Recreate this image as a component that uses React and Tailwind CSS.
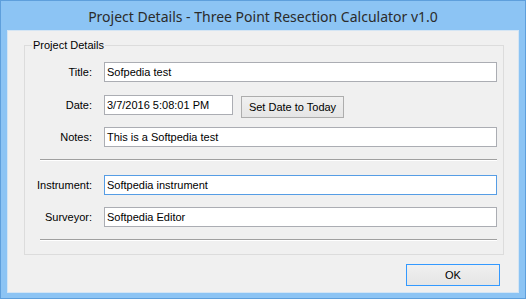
const fields = [
  { label: "Title:", value: "Sofpedia test" },
];

function TextBox({ value, width = "w-[393px]", focused = false }) {
  return (
    <div
      className={`${width} h-[20px] bg-white border ${
        focused ? "border-[#569de5]" : "border-[#abadb3]"
      } flex items-center pl-[2px] text-[11px] text-black leading-none whitespace-nowrap overflow-hidden`}
    >
      {value}
    </div>
  );
}

function Row({ label, children, className = "" }) {
  return (
    <div className={`flex items-start ${className}`}>
      <div className="w-[67px] h-[20px] flex items-center justify-end text-[11px] text-black leading-none">
        {label}
      </div>
      <div className="ml-[12px] flex items-start">{children}</div>
    </div>
  );
}

function Separator({ className = "" }) {
  return (
    <div className={`ml-[15px] w-[457px] ${className}`}>
      <div className="h-px bg-[#a0a0a0]" />
      <div className="h-px bg-white" />
    </div>
  );
}

export default function App() {
  return (
    <div className="w-[526px] h-[299px] bg-[#8cc4f4] border border-[#5e9fdc] flex flex-col font-['Liberation_Sans',Arial,sans-serif]">
      {/* title bar */}
      <div className="h-[29px] flex items-center justify-center text-[14px] text-[#2b2b2b] font-['Noto_Sans',sans-serif] pt-[2px]">
        Project Details - Three Point Resection Calculator v1.0
      </div>

      {/* client area */}
      <div className="mx-[6px] h-[263px] border border-[#d4e5f4] bg-[#f0f0f0] flex flex-col">
        <fieldset className="ml-[16px] mt-[8px] w-[480px] h-[216px] border border-[#dcdcdc]">
          <legend className="ml-[7px] px-[1px] text-[11px] leading-[13px] text-black">
            Project Details
          </legend>

          <div className="flex flex-col">
            <Row label="Title:" className="mt-[10px]">
              <TextBox value={fields[0].value} />
            </Row>

            <Row label="Date:" className="mt-[13px]">
              <TextBox value="3/7/2016 5:08:01 PM" width="w-[129px]" />
              <button className="ml-[8px] mt-[1px] w-[103px] h-[22px] border border-[#adadad] bg-gradient-to-b from-[#f0f0f0] to-[#e5e5e5] text-[11px] text-black leading-none flex items-center justify-center">
                Set Date to Today
              </button>
            </Row>

            <Row label="Notes:" className="mt-[9px]">
              <TextBox value="This is a Softpedia test" />
            </Row>

            <Separator className="mt-[12px]" />

            <Row label="Instrument:" className="mt-[14px]">
              <TextBox value="Softpedia instrument" focused />
            </Row>

            <Row label="Surveyor:" className="mt-[12px]">
              <TextBox value="Softpedia Editor" />
            </Row>

            <Separator className="mt-[12px]" />
          </div>
        </fieldset>

        <div className="mt-[9px] flex">
          <button className="ml-[398px] w-[94px] h-[22px] border border-[#3399ff] bg-gradient-to-b from-[#f0f0f0] to-[#e5e5e5] text-[11px] text-black leading-none flex items-center justify-center">
            OK
          </button>
        </div>
      </div>
    </div>
  );
}
